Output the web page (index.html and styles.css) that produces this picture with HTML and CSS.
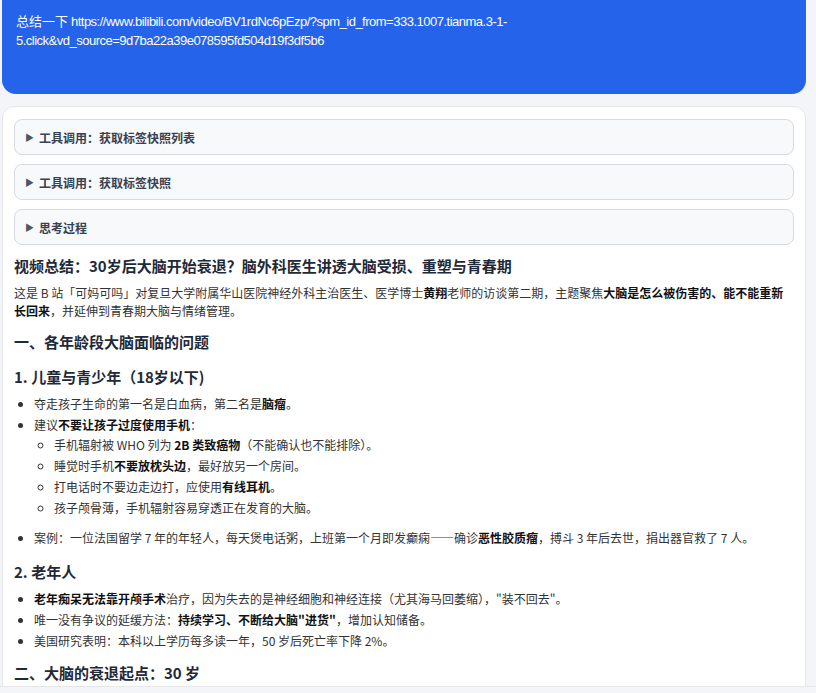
FILE: index.html
```html
<!DOCTYPE html>
<html lang="zh-CN">
<head>
<meta charset="utf-8">
<title>视频总结</title>
<link rel="stylesheet" href="styles.css">
</head>
<body>
<div class="app">
  <div class="chat">
    <div class="user-msg">总结一下 <span class="url">https://www.bilibili.com/video/BV1rdNc6pEzp/?spm_id_from=333.1007.tianma.3-1-5.click&amp;vd_source=9d7ba22a39e078595fd504d19f3df5b6</span></div>
    <div class="bot-msg">
      <details class="fold"><summary><span class="tri">▶</span>工具调用：获取标签快照列表</summary></details>
      <details class="fold"><summary><span class="tri">▶</span>工具调用：获取标签快照</summary></details>
      <details class="fold"><summary><span class="tri">▶</span>思考过程</summary></details>
      <div class="md">
        <h1>视频总结：30岁后大脑开始衰退？脑外科医生讲透大脑受损、重塑与青春期</h1>
        <p>这是 B 站「可妈可吗」对复旦大学附属华山医院神经外科主治医生、医学博士<b>黄翔</b>老师的访谈第二期，主题聚焦<b>大脑是怎么被伤害的、能不能重新长回来</b>，并延伸到青春期大脑与情绪管理。</p>
        <h2>一、各年龄段大脑面临的问题</h2>
        <h3>1. 儿童与青少年（18岁以下)</h3>
        <ul>
          <li>夺走孩子生命的第一名是白血病，第二名是<b>脑瘤</b>。</li>
          <li>建议<b>不要让孩子过度使用手机</b>：
            <ul>
              <li>手机辐射被 WHO 列为 <b>2B 类致癌物</b>（不能确认也不能排除）。</li>
              <li>睡觉时手机<b>不要放枕头边</b>，最好放另一个房间。</li>
              <li>打电话时不要边走边打，应使用<b>有线耳机</b>。</li>
              <li>孩子颅骨薄，手机辐射容易穿透正在发育的大脑。</li>
            </ul>
          </li>
          <li>案例：一位法国留学 7 年的年轻人，每天煲电话粥，上班第一个月即发癫痫——确诊<b>恶性胶质瘤</b>，搏斗 3 年后去世，捐出器官救了 7 人。</li>
        </ul>
        <h3>2. 老年人</h3>
        <ul>
          <li><b>老年痴呆无法靠开颅手术</b>治疗，因为失去的是神经细胞和神经连接（尤其海马回萎缩），"装不回去"。</li>
          <li>唯一没有争议的延缓方法：<b>持续学习、不断给大脑"进货"</b>，增加认知储备。</li>
          <li>美国研究表明：本科以上学历每多读一年，50 岁后死亡率下降 2%。</li>
        </ul>
        <h2>二、大脑的衰退起点：30 岁</h2>
      </div>
    </div>
  </div>
  <div class="composer"></div>
</div>
</body>
</html>
```
FILE: styles.css
```css
html, body {
  margin: 0;
  padding: 0;
  height: 100%;
  overflow: hidden;
  background: #f4f5f9;
  font-family: "Noto Sans CJK SC", "Noto Sans", sans-serif;
  color: #333;
}
.app {
  display: flex;
  flex-direction: column;
  height: 693px;
}
.chat {
  height: 686px;
  overflow: hidden;
  padding: 0 10px 0 2px;
  display: flex;
  flex-direction: column;
  gap: 12px;
  flex-shrink: 0;
}
.user-msg {
  background: #2563eb;
  color: #fff;
  border-radius: 0 0 14px 14px;
  padding: 12px 14px;
  min-height: 94px;
  box-sizing: border-box;
  font-size: 13px;
  line-height: 18px;
  overflow-wrap: anywhere;
}
.url {
  font-family: "Liberation Sans", "Noto Sans CJK SC", sans-serif;
  letter-spacing: -0.5px;
}
.bot-msg {
  background: #fff;
  border: 1px solid #e5e7eb;
  border-radius: 12px;
  padding: 12px 11px;
  flex-shrink: 0;
}
.fold {
  background: #f8f9fb;
  border: 1px solid #d7dae0;
  border-radius: 8px;
  margin-bottom: 9px;
}
.fold summary {
  list-style: none;
  display: flex;
  align-items: center;
  height: 34px;
  padding-left: 10px;
  font-size: 12px;
  font-weight: 700;
  color: #374151;
}
.fold summary::-webkit-details-marker { display: none; }
.tri {
  font-size: 9px;
  color: #4b5563;
  width: 14px;
}
.md {
  font-size: 12px;
  line-height: 18px;
  color: #333;
}
.md b { color: #111; font-weight: 700; }
.md h1 {
  font-size: 15px;
  line-height: 22px;
  margin: 10px 0 7px;
  color: #1f2937;
}
.md p { margin: 0; }
.md h2 {
  font-size: 15px;
  line-height: 22px;
  margin: 11px 0 13px;
  color: #1f2937;
}
.md ul + h2 { margin-top: 12px; }
.md h3 {
  font-size: 15px;
  line-height: 22px;
  margin: 14px 0 7px;
  color: #1f2937;
}
.md h2 + h3 { margin-top: 0; }
.md ul {
  margin: 0;
  padding-left: 20px;
}
.md li { margin-bottom: 3px; }
.md li ul {
  list-style: circle;
  margin: 2px 0 12px;
}
.composer {
  flex: 1;
  border-top: 1px solid #e5e7eb;
  background: #f4f5f9;
}
```
